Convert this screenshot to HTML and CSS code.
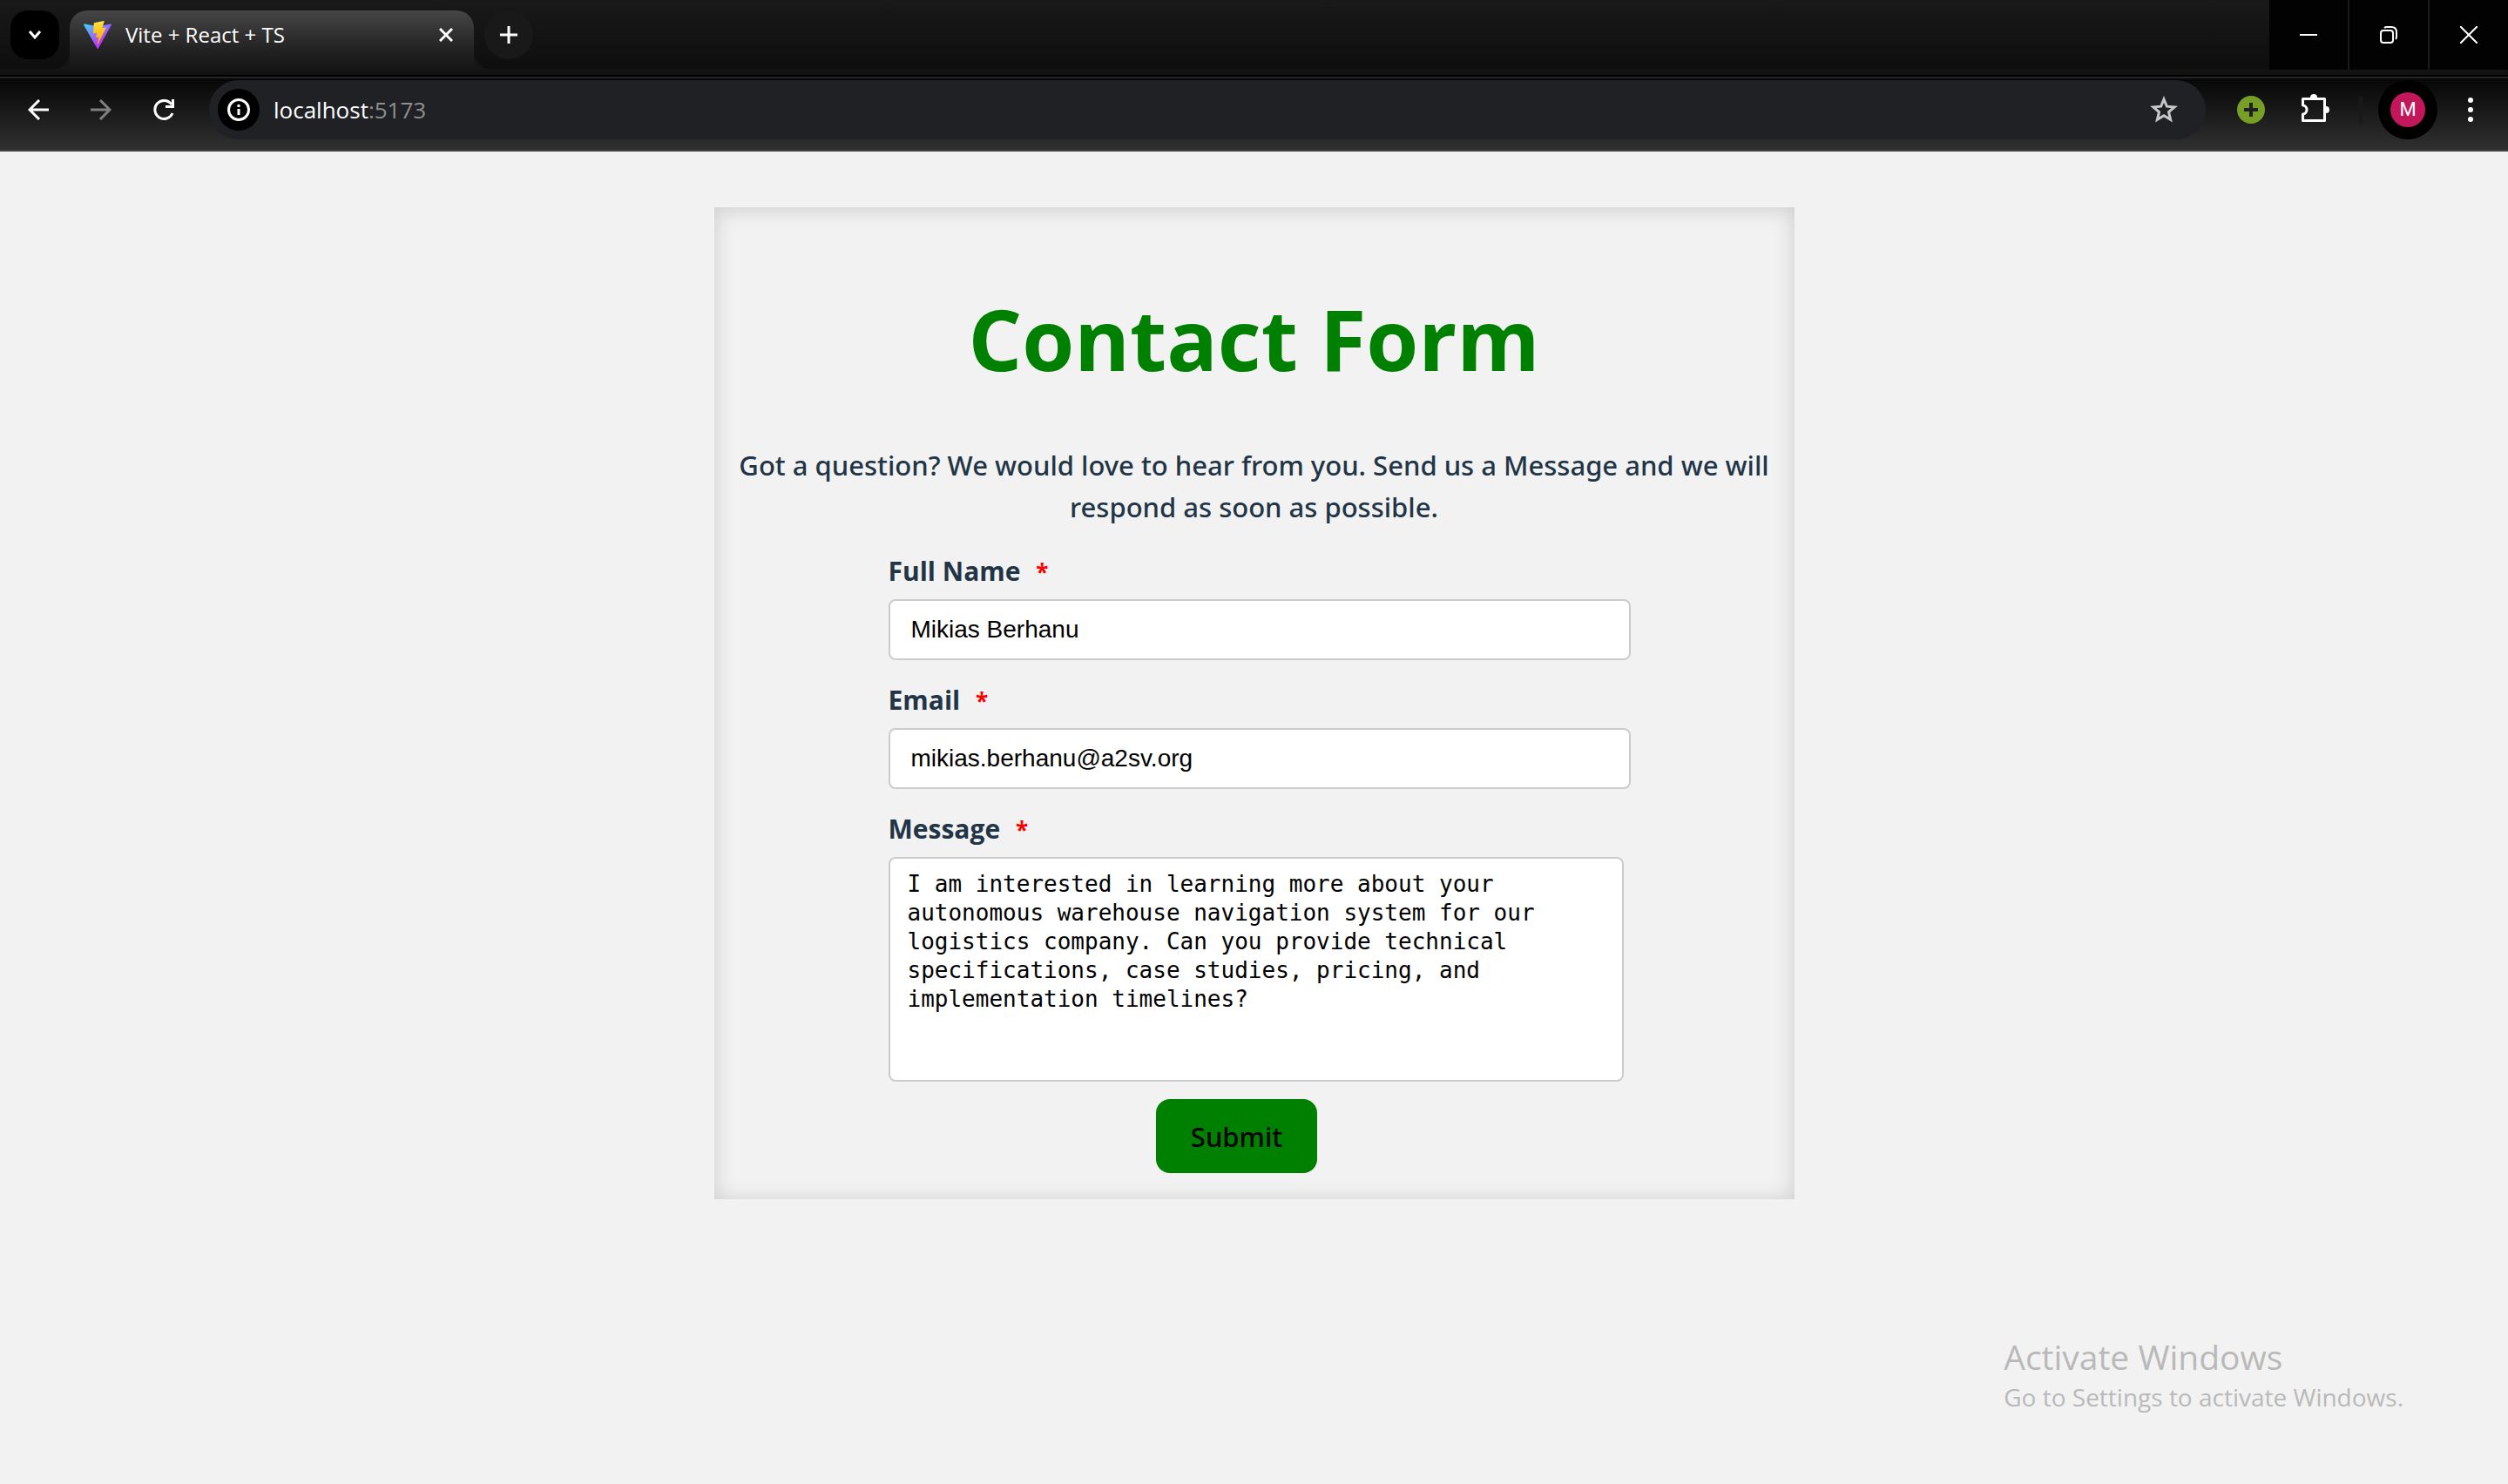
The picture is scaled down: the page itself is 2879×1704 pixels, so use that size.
FILE: index.html
```html
<!DOCTYPE html>
<html lang="en">
<head>
  <meta charset="utf-8">
  <meta name="viewport" content="width=device-width, initial-scale=1">
  <title>Vite + React + TS</title>
  <link rel="stylesheet" href="styles.css">
</head>
<body>
  <header class="browser">
    <div class="tab-strip">
      <button class="tab-search" type="button" aria-label="Search tabs">
        <svg width="20" height="20" viewBox="0 0 20 20" fill="none" stroke="#fff" stroke-width="3"><path d="M4 6l6 7 6-7"/></svg>
      </button>
      <div class="tab">
        <svg class="tab-icon" width="32" height="32" viewBox="0 0 256 257" aria-hidden="true">
          <defs>
            <linearGradient id="shield" x1="-.828%" x2="57.636%" y1="7.652%" y2="78.411%"><stop offset="0%" stop-color="#41D1FF"/><stop offset="100%" stop-color="#BD34FE"/></linearGradient>
            <linearGradient id="bolt" x1="43.376%" x2="50.316%" y1="2.242%" y2="89.03%"><stop offset="0%" stop-color="#FFEA83"/><stop offset="8.333%" stop-color="#FFDD35"/><stop offset="100%" stop-color="#FFA800"/></linearGradient>
          </defs>
          <path fill="url(#shield)" d="M255.153 37.938L134.897 252.976c-2.483 4.44-8.862 4.466-11.382.048L.875 37.958c-2.746-4.814 1.371-10.646 6.827-9.67l120.385 21.517a6.537 6.537 0 0 0 2.322-.004l117.867-21.483c5.438-.991 9.574 4.796 6.877 9.62Z"/>
          <path fill="url(#bolt)" d="M185.432.063L96.44 17.501a3.268 3.268 0 0 0-2.634 3.014l-5.474 92.456a3.268 3.268 0 0 0 3.997 3.378l24.777-5.718c2.318-.535 4.413 1.507 3.936 3.838l-7.361 36.047c-.495 2.426 1.782 4.5 4.151 3.78l15.304-4.649c2.372-.72 4.652 1.36 4.15 3.788l-11.698 56.621c-.732 3.542 3.979 5.473 5.943 2.437l1.313-2.028l72.516-144.72c1.215-2.423-.88-5.186-3.54-4.672l-25.505 4.922c-2.396.462-4.435-1.77-3.759-4.114l16.646-57.705c.677-2.35-1.37-4.583-3.769-4.113Z"/>
        </svg>
        <span class="tab-title">Vite + React + TS</span>
        <button class="tab-close" type="button" aria-label="Close tab">
          <svg width="16" height="16" viewBox="0 0 16 16" stroke="#fff" stroke-width="3"><path d="M1 1l14 14M15 1L1 15"/></svg>
        </button>
      </div>
      <button class="new-tab" type="button" aria-label="New tab">
        <svg width="20" height="20" viewBox="0 0 20 20" stroke="#fff" stroke-width="3"><path d="M10 0v20M0 10h20"/></svg>
      </button>
      <div class="window-controls">
        <button class="window-button" type="button" aria-label="Minimize">
          <svg width="20" height="20" viewBox="0 0 20 20" stroke="#fff" stroke-width="2"><path d="M0 10h20"/></svg>
        </button>
        <button class="window-button" type="button" aria-label="Restore">
          <svg width="20" height="20" viewBox="0 0 20 20" fill="none" stroke="#fff" stroke-width="2"><rect x="1" y="5" width="14" height="14" rx="3"/><path d="M5 2q1-1 3-1h5q6 0 6 6v5q0 2-1 3"/></svg>
        </button>
        <button class="window-button" type="button" aria-label="Close">
          <svg width="20" height="20" viewBox="0 0 20 20" stroke="#fff" stroke-width="2"><path d="M0 0l20 20M20 0L0 20"/></svg>
        </button>
      </div>
    </div>

    <div class="toolbar">
      <nav class="history">
        <button class="tool" type="button" aria-label="Back">
          <svg width="24" height="24" viewBox="0 0 24 24" fill="none" stroke="#fff" stroke-width="3"><path d="M24 12H2M13 1L2 12l11 11"/></svg>
        </button>
        <button class="tool" type="button" aria-label="Forward" disabled>
          <svg width="24" height="24" viewBox="0 0 24 24" fill="none" stroke="#808080" stroke-width="3"><path d="M0 12h22M11 1l11 11-11 11"/></svg>
        </button>
        <button class="tool" type="button" aria-label="Reload">
          <svg width="24" height="24" viewBox="0 0 24 24" fill="none" stroke="#fff" stroke-width="3"><path d="M22 16A10.5 10.5 0 1 1 21 6"/><path d="M22.500 0v8.500H14"/></svg>
        </button>
      </nav>
      <div class="omnibox">
        <button class="site-info" type="button" aria-label="View site information">
          <svg width="26" height="26" viewBox="0 0 26 26" fill="none" stroke="#fff" stroke-width="3"><circle cx="13" cy="13" r="11.500"/><path d="M13 12v7M13 7v3"/></svg>
        </button>
        <div class="address">localhost<span class="port">:5173</span></div>
        <button class="bookmark" type="button" aria-label="Bookmark this tab">
          <svg width="32" height="32" viewBox="0 0 32 32" fill="none" stroke="#c7c7c7" stroke-width="3"><path d="M16 4l3.400 8.200 8.800.7-6.700 5.700 2.100 8.700L16 22.700l-7.600 4.600 2.100-8.700-6.700-5.700 8.800-.7z"/></svg>
        </button>
      </div>
      <div class="actions">
        <button class="tool" type="button" aria-label="Extension">
          <svg width="32" height="32" viewBox="0 0 32 32"><circle cx="16" cy="16" r="16" fill="#779e26"/><path d="M16 8v16M8 16h16" stroke="#202020" stroke-width="4"/></svg>
        </button>
        <button class="tool" type="button" aria-label="Extensions">
          <svg width="36" height="36" viewBox="0 0 36 36"><path d="M5.500 5.500h25v25h-25v-7.500a4.500 5 0 0 0 0-10z" fill="none" stroke="#fff" stroke-width="3" stroke-linejoin="round"/><path d="M14 4a4 4 0 0 1 8 0v1h-8zM32 14a4 4 0 0 1 0 8h-1v-8z" fill="#fff"/></svg>
        </button>
        <span class="divider"></span>
        <button class="profile" type="button" aria-label="Profile"><span class="avatar">M</span></button>
        <button class="tool" type="button" aria-label="Menu">
          <svg width="8" height="28" viewBox="0 0 8 28" fill="#fff"><circle cx="4" cy="3" r="3"/><circle cx="4" cy="14" r="3"/><circle cx="4" cy="25" r="3"/></svg>
        </button>
      </div>
    </div>
  </header>

  <main class="page">
    <section class="card">
      <h1 class="title">Contact Form</h1>
      <p class="intro">Got a question? We would love to hear from you. Send us a Message and we will respond as soon as possible.</p>
      <form class="form">
        <div class="field">
          <label class="label" for="name">Full Name <span class="required">*</span></label>
          <input class="input" id="name" type="text" value="Mikias Berhanu">
        </div>
        <div class="field">
          <label class="label" for="email">Email <span class="required">*</span></label>
          <input class="input" id="email" type="email" value="mikias.berhanu@a2sv.org">
        </div>
        <div class="field">
          <label class="label" for="message">Message <span class="required">*</span></label>
          <textarea class="textarea" id="message">I am interested in learning more about your autonomous warehouse navigation system for our logistics company. Can you provide technical specifications, case studies, pricing, and implementation timelines?</textarea>
        </div>
        <button class="submit" type="submit">Submit</button>
      </form>
    </section>
  </main>

  <aside class="watermark">
    <p class="watermark-title">Activate Windows</p>
    <p class="watermark-text">Go to Settings to activate Windows.</p>
  </aside>
</body>
</html>
```
FILE: styles.css
```css
* {
  box-sizing: border-box;
}

body {
  margin: 0;
  min-height: 100vh;
  background: #f2f2f2;
  color: #213547;
  font-family: "Open Sans", "Noto Sans", sans-serif;
}

button {
  display: flex;
  align-items: center;
  justify-content: center;
  margin: 0;
  padding: 0;
  border: 0;
  background: none;
  font-family: inherit;
}

/* Browser chrome */

.browser {
  color: #fff;
}

.tab-strip {
  display: flex;
  align-items: flex-start;
  height: 90px;
  padding-left: 12px;
  background: linear-gradient(#191919, #0e0e0e 80px, #141414 80px, #111 86px, #000 86px, #000 88px, #262626 88px);
}

.tab-search {
  width: 56px;
  height: 56px;
  margin-top: 12px;
  border-radius: 20px;
  background: #000;
}

.tab {
  position: relative;
  display: flex;
  align-items: center;
  width: 464px;
  height: 74px;
  margin: 12px 12px 0;
  padding: 0 24px 18px 16px;
  border-radius: 20px 20px 0 0;
  background: linear-gradient(#464646, #262626 40px, #111);
}

.tab::before,
.tab::after {
  content: "";
  position: absolute;
  bottom: 6px;
  width: 20px;
  height: 20px;
}

.tab::before {
  right: 100%;
  background: radial-gradient(circle at 0 0, transparent 20px, #161616 20px);
}

.tab::after {
  left: 100%;
  background: radial-gradient(circle at 100% 0, transparent 20px, #161616 20px);
}

.tab-title {
  flex: 1;
  padding-left: 16px;
  font-size: 24px;
  line-height: 32px;
}

.new-tab {
  width: 56px;
  height: 56px;
  margin-top: 12px;
  border-radius: 50%;
  background: #191919;
}

.window-controls {
  display: flex;
  gap: 2px;
  margin-left: auto;
  background: #1a1a1a;
}

.window-button {
  width: 90px;
  height: 80px;
  background: #020202;
}

.toolbar {
  display: flex;
  align-items: center;
  gap: 24px;
  height: 84px;
  padding: 0 15px 10px 16px;
  border-bottom: 2px solid #424242;
  background: linear-gradient(#060606, #303030);
}

.history {
  display: flex;
  gap: 16px;
}

.tool {
  width: 56px;
  height: 56px;
}

.omnibox {
  display: flex;
  flex: 1;
  align-items: center;
  height: 68px;
  padding: 0 20px 0 10px;
  border-radius: 34px;
  background: #202125;
}

.site-info {
  width: 48px;
  height: 48px;
  border-radius: 50%;
  background: #000;
}

.address {
  flex: 1;
  padding-left: 16px;
  font-size: 26px;
  line-height: 40px;
}

.port {
  color: #8e8e8e;
}

.bookmark {
  width: 56px;
  height: 56px;
}

.actions {
  display: flex;
  align-items: center;
}

.actions .tool + .tool {
  margin-left: 16px;
}

.divider {
  width: 4px;
  height: 32px;
  margin: 0 18px 0 24px;
  border-radius: 2px;
  background: #191919;
}

.profile {
  width: 68px;
  height: 68px;
  margin-right: 10px;
  border-radius: 50%;
  background: #000;
}

.avatar {
  width: 40px;
  border-radius: 50%;
  background: #c2185b;
  color: #fff;
  font-family: Roboto, sans-serif;
  font-size: 22px;
  line-height: 40px;
}

/* Contact form */

.page {
  padding: 64px 32px;
}

.card {
  max-width: 1240px;
  margin: 0 auto;
  padding: 78px 24px 30px;
  box-shadow: inset 0 2px 24px rgba(0, 0, 0, 0.16);
}

.title {
  margin: 0;
  color: #008000;
  font-size: 97px;
  font-weight: 700;
  line-height: 144px;
  text-align: center;
}

.intro {
  margin: 50px 0 26px;
  font-family: "Noto Sans", "Open Sans", sans-serif;
  font-size: 31px;
  font-weight: 500;
  line-height: 48px;
  text-align: center;
}

.form {
  display: flex;
  flex-direction: column;
  align-items: center;
  max-width: 800px;
  margin-left: 176px;
}

.field {
  align-self: flex-start;
  margin-bottom: 20px;
}

.label {
  display: block;
  padding-bottom: 8px;
  font-size: 30px;
  font-weight: 700;
  line-height: 48px;
}

.field + .field {
  padding-top: 2px;
}

.required {
  margin-left: 10px;
  color: #f00;
  font-size: 26px;
  line-height: 1;
}

.input,
.textarea {
  display: block;
  border: 2px solid #ccc;
  border-radius: 8px;
  outline: 0;
  background: #fff;
  color: #000;
}

.input {
  width: 852px;
  max-width: 100vw;
  height: 70px;
  padding: 0 24px;
  font-family: "Liberation Sans", Arial, sans-serif;
  font-size: 28px;
}

.textarea {
  width: 844px;
  height: 258px;
  padding: 13px 20px;
  font-family: "DejaVu Sans Mono", Consolas, monospace;
  font-size: 26px;
  line-height: 33px;
  resize: none;
}

.submit {
  height: 85px;
  padding: 0 40px;
  border-radius: 16px;
  background: #008000;
  color: #000;
  font-family: "Noto Sans", "Open Sans", sans-serif;
  font-size: 31px;
  font-weight: 500;
}

/* System watermark over the page */

.watermark {
  position: absolute;
  right: 120px;
  bottom: 82px;
  color: #b9b9b9;
}

.watermark-title,
.watermark-text {
  margin: 0;
}

.watermark-title {
  font-size: 39px;
  line-height: 56px;
}

.watermark-text {
  font-size: 28px;
  line-height: 36px;
}
```
